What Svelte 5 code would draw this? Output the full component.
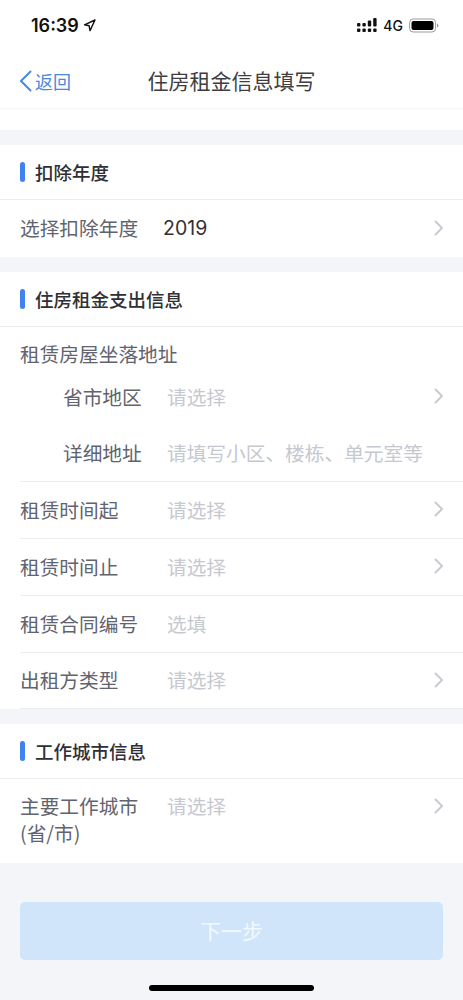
<script lang="ts">
  const rentRows = [
    { label: "租赁时间起", hint: "请选择", arrow: true },
    { label: "租赁时间止", hint: "请选择", arrow: true },
    { label: "租赁合同编号", hint: "选填", arrow: false },
    { label: "出租方类型", hint: "请选择", arrow: true },
  ];
</script>

{#snippet chevron()}
  <svg class="chevron" width="10" height="16" viewBox="0 0 10 16" fill="none">
    <path d="M1.5 1.5 8 8l-6.5 6.5" stroke="#c9cbd1" stroke-width="2" stroke-linecap="round" stroke-linejoin="round" />
  </svg>
{/snippet}

<div class="page">
  <div class="status">
    <div class="time">
      16:39
      <svg width="13" height="13" viewBox="0 0 13 13"><path d="M12 1 1.5 5.8l4.6.9.9 4.9z" fill="none" stroke="#111" stroke-width="1.4" stroke-linejoin="round" /></svg>
    </div>
    <div class="indicators">
      <svg width="20" height="15" viewBox="0 0 20 15" fill="#111">
        <rect x="0" y="5" width="3.4" height="3.4" rx="1" />
        <rect x="0" y="10.5" width="3.4" height="3.4" rx="1" />
        <rect x="5.4" y="5" width="3.4" height="3.4" rx="1" />
        <rect x="5.4" y="10.5" width="3.4" height="3.4" rx="1" />
        <rect x="10.8" y="2.5" width="3.4" height="6" rx="1" />
        <rect x="10.8" y="10.5" width="3.4" height="3.4" rx="1" />
        <rect x="16.2" y="0" width="3.4" height="8.5" rx="1" />
        <rect x="16.2" y="10.5" width="3.4" height="3.4" rx="1" />
      </svg>
      <span class="net">4G</span>
      <svg width="30" height="15" viewBox="0 0 30 15">
        <rect x="0.6" y="1" width="26" height="13" rx="3.6" fill="none" stroke="#9a9a9a" stroke-width="1" />
        <rect x="2.5" y="3" width="22" height="9" rx="2" fill="#000" />
        <path d="M28 5.5c1 .3 1.4 1.1 1.4 2s-.4 1.7-1.4 2z" fill="#9a9a9a" />
      </svg>
    </div>
  </div>

  <div class="nav">
    <div class="back">
      <svg width="13" height="22" viewBox="0 0 13 22" fill="none">
        <path d="M11.5 1.5 2 11l9.5 9.5" stroke="#4a88e0" stroke-width="2" stroke-linecap="round" stroke-linejoin="round" />
      </svg>
      <span>返回</span>
    </div>
    <div class="title">住房租金信息填写</div>
  </div>
  <div class="spacer"></div>

  <section>
    <h2>扣除年度</h2>
    <div class="row year">
      <span class="label">选择扣除年度</span>
      <span class="value">2019</span>
      {@render chevron()}
    </div>
  </section>

  <section>
    <h2>住房租金支出信息</h2>
    <div class="address">
      <div class="addr-title">租赁房屋坐落地址</div>
      <div class="sub first">
        <span class="sub-label">省市地区</span>
        <span class="hint">请选择</span>
        {@render chevron()}
      </div>
      <div class="sub">
        <span class="sub-label">详细地址</span>
        <span class="hint">请填写小区、楼栋、单元室等</span>
      </div>
    </div>
    {#each rentRows as r (r.label)}
      <div class="row">
        <span class="label">{r.label}</span>
        <span class="hint">{r.hint}</span>
        {#if r.arrow}{@render chevron()}{/if}
      </div>
    {/each}
  </section>

  <section>
    <h2>工作城市信息</h2>
    <div class="row city">
      <span class="label">主要工作城市<br />(省/市)</span>
      <span class="hint">请选择</span>
      {@render chevron()}
    </div>
  </section>

  <div class="footer">
    <button type="button" disabled>下一步</button>
  </div>
  <div class="home-bar"></div>
</div>

<style>
  :global(body) {
    margin: 0;
    background: #f3f5f9;
  }
  .page {
    width: 463px;
    height: 1000px;
    overflow: hidden;
    background: #f3f5f9;
    font-family: "Noto Sans CJK SC", "Liberation Sans", sans-serif;
    display: flex;
    flex-direction: column;
  }
  .status {
    height: 50px;
    flex: none;
    box-sizing: border-box;
    background: #fff;
    display: flex;
    align-items: center;
    justify-content: space-between;
    padding: 0 24px 0 31px;
  }
  .time {
    display: flex;
    align-items: center;
    gap: 4px;
    font-family: Inter, sans-serif;
    font-size: 18px;
    font-weight: 600;
    color: #111;
  }
  .indicators {
    display: flex;
    align-items: center;
    gap: 6px;
  }
  .net {
    font-family: Inter, sans-serif;
    font-size: 14px;
    font-weight: 500;
    color: #111;
  }
  .nav {
    height: 59px;
    flex: none;
    box-sizing: border-box;
    padding-top: 1px;
    background: #fff;
    border-bottom: 1px solid #f4f5f7;
    display: flex;
    align-items: center;
    justify-content: center;
    position: relative;
  }
  .back {
    position: absolute;
    left: 19px;
    top: 18px;
    display: flex;
    align-items: center;
    gap: 3px;
    color: #4a88e0;
    font-size: 18px;
  }
  .title {
    font-size: 21px;
    color: #3d3d42;
  }
  .spacer {
    height: 21px;
    flex: none;
    background: #fff;
  }
  section {
    margin-top: 15px;
    background: #fff;
    flex: none;
  }
  h2 {
    margin: 0;
    height: 55px;
    box-sizing: border-box;
    padding: 0 0 1px 20px;
    border-bottom: 1px solid #ececef;
    display: flex;
    align-items: center;
    gap: 10px;
    font-size: 18.5px;
    font-weight: 500;
    color: #2f3035;
  }
  h2::before {
    content: "";
    width: 5px;
    height: 20px;
    border-radius: 2.5px;
    background: #3f82f0;
  }
  .row {
    height: 57px;
    box-sizing: border-box;
    margin-left: 20px;
    padding: 0 20px 2px 0;
    border-bottom: 1px solid #ececef;
    display: flex;
    align-items: center;
    font-size: 19.7px;
  }
  .row:last-child {
    height: 56px;
  }
  .row.year {
    height: 57px;
    border-bottom: 0;
  }
  .label {
    width: 147px;
    flex: none;
    color: #61636e;
    line-height: 27px;
  }
  .value {
    flex: 1;
    font-family: Inter, sans-serif;
    font-size: 19.5px;
    color: #2f3035;
    margin-left: -4px;
  }
  .hint {
    flex: 1;
    color: #c6c8d0;
    white-space: nowrap;
  }
  .chevron {
    flex: none;
    margin-right: -1px;
  }
  .address {
    margin-left: 20px;
    padding-right: 20px;
    height: 155px;
    box-sizing: border-box;
    border-bottom: 1px solid #ececef;
    font-size: 19.7px;
  }
  .addr-title {
    padding-top: 13px;
    height: 29px;
    line-height: 27px;
    color: #61636e;
  }
  .sub {
    height: 57px;
    box-sizing: border-box;
    padding-bottom: 2px;
    display: flex;
    align-items: center;
  }
  .sub.first {
    height: 56px;
  }
  .sub-label {
    width: 104px;
    margin-left: 43px;
    flex: none;
    color: #61636e;
  }
  .row.city {
    height: 84px;
    border-bottom: 0;
    align-items: flex-start;
    padding-top: 13px;
    padding-bottom: 0;
  }
  .city .hint {
    line-height: 27px;
  }
  .city .chevron {
    margin-top: 6px;
  }
  .footer {
    padding: 39px 20px 0;
    flex: none;
  }
  button {
    display: block;
    width: 100%;
    height: 58px;
    border: 0;
    padding: 0 0 2px;
    border-radius: 5px;
    background: #d1e5fa;
    color: #f3f8fe;
    font: inherit;
    font-size: 21px;
  }
  .home-bar {
    width: 165px;
    height: 6px;
    flex: none;
    border-radius: 3px;
    background: #000;
    margin: 25px auto 0;
  }
</style>
